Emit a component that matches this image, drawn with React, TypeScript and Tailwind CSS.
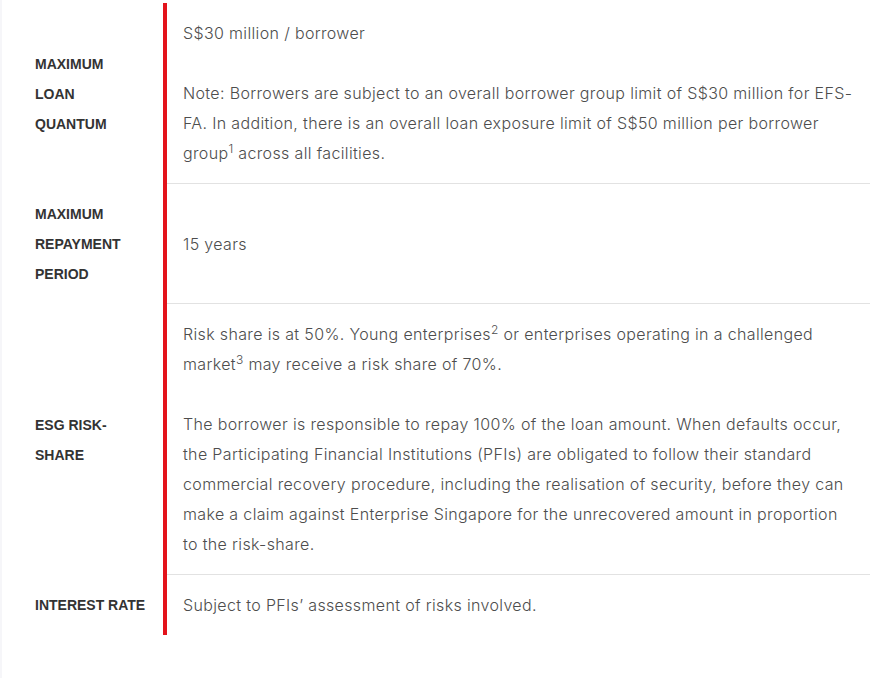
const body = "font-['Inter',sans-serif] font-light text-[16px] tracking-[0.35px] leading-[30px] text-[#4d4d4d]";

function Row({
  label,
  children,
  last,
}: {
  label: string[];
  children: React.ReactNode;
  last?: boolean;
}) {
  return (
    <div className="flex">
      <div className="w-[165px] shrink-0 border-r-4 border-[#e3131b] pl-[33px] py-[15px] flex items-center">
        <div className="font-['Liberation_Sans',Arial,sans-serif] font-bold text-[14px] leading-[30px] text-[#333]">
          {label.map((l) => (
            <div key={l}>{l}</div>
          ))}
        </div>
      </div>
      <div
        className={
          "w-[703px] py-[15px] pl-4 pr-4 flex flex-col justify-center " +
          (last ? "" : "border-b border-[#e2e2e2]")
        }
      >
        <div className={body}>{children}</div>
      </div>
    </div>
  );
}

export default function App() {
  return (
    <div className="min-h-[678px] w-[893px] bg-white border-l-2 border-[#f6f6f9] pt-[3px]">
      <Row label={["MAXIMUM", "LOAN", "QUANTUM"]}>
        <p>S$30 million / borrower</p>
        <p className="mt-[30px]">
          Note: Borrowers are subject to an overall borrower group limit of S$30 million for EFS-FA. In
          addition, there is an overall loan exposure limit of S$50 million per borrower group
          <sup className="text-[12px]">1</sup> across all facilities.
        </p>
      </Row>
      <Row label={["MAXIMUM", "REPAYMENT", "PERIOD"]}>
        <p>15 years</p>
      </Row>
      <Row label={["ESG RISK-", "SHARE"]}>
        <p>
          Risk share is at 50%. Young enterprises<sup className="text-[12px]">2</sup> or enterprises
          operating in a challenged market<sup className="text-[12px]">3</sup> may receive a risk share
          of 70%.
        </p>
        <p className="mt-[30px]">
          The borrower is responsible to repay 100% of the loan amount. When defaults occur, the
          Participating Financial Institutions (PFIs) are obligated to follow their standard commercial
          recovery procedure, including the realisation of security, before they can make a claim
          against Enterprise Singapore for the unrecovered amount in proportion to the risk-share.
        </p>
      </Row>
      <Row label={["INTEREST RATE"]} last>
        <p>Subject to PFIs’ assessment of risks involved.</p>
      </Row>
    </div>
  );
}
